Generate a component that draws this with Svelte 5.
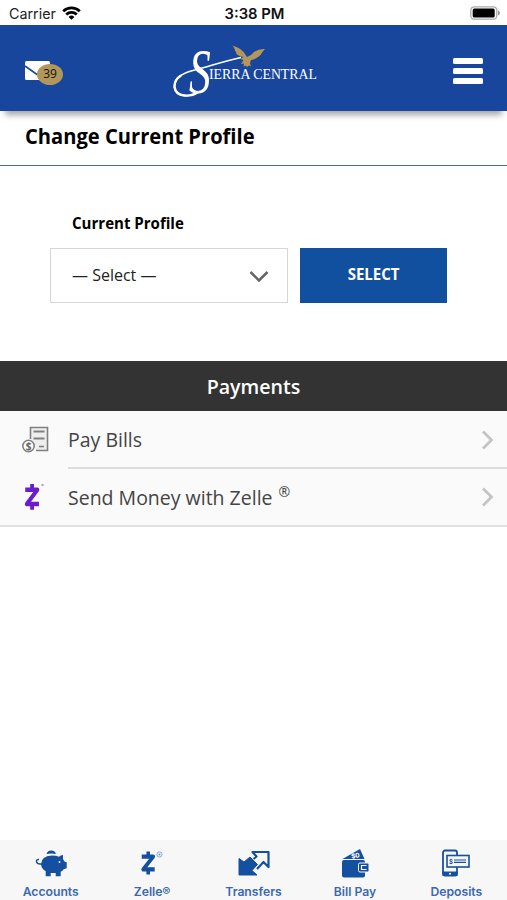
<script>
  const unread = 39;

  const payments = [
    { id: "bills", label: "Pay Bills" },
    { id: "zelle", label: "Send Money with Zelle", mark: "®" },
  ];

  const tabs = [
    { id: "accounts", label: "Accounts" },
    { id: "zelle", label: "Zelle®" },
    { id: "transfers", label: "Transfers" },
    { id: "billpay", label: "Bill Pay" },
    { id: "deposits", label: "Deposits" },
  ];
</script>

<style>
  :global(body) {
    margin: 0;
    background: #fff;
  }

  .screen {
    display: flex;
    flex-direction: column;
    width: 507px;
    height: 900px;
    overflow: hidden;
    background: #fff;
    font-family: "Open Sans", "Noto Sans", sans-serif;
    color: #000;
  }

  svg {
    display: block;
  }

  button {
    margin: 0;
    padding: 0;
    border: 0;
    background: none;
    font: inherit;
    color: inherit;
  }

  .status {
    display: grid;
    grid-template-columns: 1fr auto 1fr;
    align-items: center;
    box-sizing: border-box;
    height: 25px;
    padding: 2px 7px 0 9px;
    font-family: Inter, sans-serif;
    font-size: 14.3px;
    color: #222;
  }

  .carrier {
    display: flex;
    align-items: center;
    gap: 6px;
  }

  .carrier svg {
    margin-top: -2px;
  }

  .time {
    font-size: 14.8px;
    font-weight: 600;
    color: #111;
  }

  .battery {
    justify-self: end;
    margin-top: -2px;
  }

  .header {
    position: relative;
    display: grid;
    grid-template-columns: 1fr auto 1fr;
    align-items: center;
    box-sizing: border-box;
    height: 86px;
    padding: 0 24px;
    background: #19469d;
    box-shadow: 0 9px 6px -5px rgba(0, 0, 0, 0.35);
  }

  .mail {
    position: relative;
    justify-self: start;
    width: 40px;
    height: 22px;
    margin-top: 5px;
  }

  .badge {
    position: absolute;
    left: 13px;
    top: 4px;
    width: 26px;
    height: 21px;
    border-radius: 50%;
    background: #b3965a;
    font-size: 12px;
    line-height: 20px;
    text-align: center;
    color: #111;
  }

  .logo {
    margin-right: 16px;
    overflow: visible;
  }

  .menu {
    justify-self: end;
    display: flex;
    flex-direction: column;
    gap: 4px;
    margin-top: 6px;
  }

  .menu span {
    width: 30px;
    height: 6px;
    border-radius: 1.5px;
    background: #fff;
  }

  .title {
    box-sizing: border-box;
    height: 55px;
    margin: 0;
    padding-left: 25px;
    border-bottom: 1px solid #3f69b0;
    font-size: 22px;
    font-weight: 700;
    line-height: 48px;
  }

  .narrow {
    display: inline-block;
    white-space: nowrap;
    transform: scaleX(0.915);
    transform-origin: left;
  }

  .profile {
    box-sizing: border-box;
    height: 195px;
    padding: 45px 60px 0 50px;
  }

  .profile label {
    display: block;
    height: 37px;
    padding-left: 22px;
    font-size: 16px;
    font-weight: 700;
    line-height: 24px;
  }

  .profile .narrow {
    transform: scaleX(0.94);
  }

  .fields {
    display: flex;
    gap: 12px;
  }

  .select {
    display: flex;
    align-items: center;
    justify-content: space-between;
    box-sizing: border-box;
    width: 238px;
    height: 55px;
    padding: 0 18px 0 21px;
    border: 1.5px solid #d6d6d6;
    font-size: 16px;
    color: #222;
  }

  .select > span {
    padding-bottom: 1px;
  }

  .submit {
    width: 147px;
    height: 55px;
    padding-bottom: 3px;
    background: #11509e;
    font-size: 16px;
    font-weight: 700;
    color: #fff;
  }

  .submit .narrow {
    transform-origin: center;
  }

  .section {
    height: 50px;
    margin: 0;
    background: #333;
    font-size: 19.6px;
    font-weight: 600;
    line-height: 52px;
    text-align: center;
    color: #fff;
  }

  .list {
    background: #fafafa;
    border-bottom: 2px solid #e0e0e0;
  }

  .row {
    display: flex;
    align-items: stretch;
    height: 58px;
  }

  .row:last-child {
    height: 56px;
  }

  .row-icon {
    display: flex;
    align-items: center;
    width: 46px;
    padding: 0 0 1px 22px;
    box-sizing: content-box;
  }

  .row-text {
    display: flex;
    flex: 1;
    align-items: center;
    justify-content: space-between;
    padding: 1px 13px 0 0;
    border-bottom: 2px solid #dedede;
    font-size: 19.5px;
    color: #444;
  }

  .row:last-child .row-text {
    padding-top: 0;
    border-bottom: 0;
  }

  sup {
    margin-left: 1px;
    font-size: 14px;
    line-height: 0;
    vertical-align: 8px;
  }

  .tabs {
    display: flex;
    height: 60px;
    margin-top: auto;
    background: #f7f7f7;
  }

  .tab {
    display: flex;
    flex: 1;
    flex-direction: column;
    align-items: center;
    padding-top: 8px;
    font-family: Inter, sans-serif;
    font-size: 12.2px;
    font-weight: 600;
    line-height: 17px;
    color: #3b68b0;
  }

  .tab span {
    padding-top: 3px;
  }

  .tab svg {
    height: 32px;
  }
</style>

{#snippet zelle(color)}
  <path fill="none" stroke={color} stroke-width="5" stroke-linejoin="round" d="M1 6.200H17L3 21.800H19M10 0V6M10 22V28" />
{/snippet}

<div class="screen">
  <div class="status">
    <div class="carrier">
      <span>Carrier</span>
      <svg width="19" height="14" viewBox="0 0 19 14" fill="none" stroke="#000" stroke-width="2.700">
        <path d="M1.200 5.200a12 12 0 0 1 16.600 0" />
        <path d="M4.200 8.500a7.700 7.700 0 0 1 10.600 0" />
        <path d="M9.500 13.800 6.600 10.900a4.200 4.200 0 0 1 5.800 0z" fill="#000" stroke="none" />
      </svg>
    </div>
    <span class="time">3:38 PM</span>
    <svg class="battery" width="30" height="14" viewBox="0 0 30 14">
      <rect x=".8" y=".8" width="26" height="12.400" rx="3.500" fill="#fff" stroke="#aaa" stroke-width="1.300" />
      <rect x="2.700" y="2.500" width="22" height="9" rx="1.500" />
      <path d="M28 4.500q2 .6 2 2.500t-2 2.500z" fill="#999" />
    </svg>
  </div>

  <header class="header">
    <div class="mail">
      <svg width="27" height="22" viewBox="0 0 27 22">
        <rect x="1" y="1" width="25" height="19" rx="1.500" fill="#fff" />
        <path d="M1 6 13 14.500 26 6" fill="none" stroke="#19469d" stroke-width="1.600" />
      </svg>
      <span class="badge">{unread}</span>
    </div>

    <svg class="logo" width="150" height="86" viewBox="0 0 150 86">
      <!-- swash looping out of the initial and up to the bird -->
      <path d="M27 67C20 72 5 73 3.500 62 3 53 12 48 22 45.500 38 41.500 50 37 70 32.500" fill="none" stroke="#fff" stroke-width="1.500" />
      <path d="M27 67C20 72 5 73 3.500 62 3.300 57 6 53 10 50.500" fill="none" stroke="#fff" stroke-width="2.400" />
      <text font-family="Liberation Serif, serif" font-style="italic" font-size="64" fill="#fff" transform="translate(18 68) scale(.68 1)">S</text>
      <text x="38" y="54" font-family="Liberation Serif, serif" font-size="15" fill="#fff" textLength="108" lengthAdjust="spacingAndGlyphs">IERRA CENTRAL</text>
      <path fill="#b3965a" d="M61 20.500q8 2 12 7l3 4.500 4-2 3-3q5-3.500 11-3-3 3-4 5.500-4 4.500-10 5.500l-1 3 1 3.500-2-1-2 1.500-1.500-1.500-2 1 .5-3-3 .5 2.500-4-3-1 3-2q-6-1-7.500-4 1-1-1-2 0-3-3.500-6.500z" />
    </svg>

    <button class="menu" aria-label="Menu">
      <span></span><span></span><span></span>
    </button>
  </header>

  <h1 class="title"><span class="narrow">Change Current Profile</span></h1>

  <div class="profile">
    <label for="profile"><span class="narrow">Current Profile</span></label>
    <div class="fields">
      <button class="select" id="profile">
        <span>— Select —</span>
        <svg width="20" height="13" viewBox="0 0 20 13" fill="none" stroke="#666" stroke-width="2.500">
          <path d="M1.500 3 10 11.500 18.500 3" />
        </svg>
      </button>
      <button class="submit"><span class="narrow">SELECT</span></button>
    </div>
  </div>

  <h2 class="section">Payments</h2>
  <div class="list">
    {#each payments as item}
      <div class="row">
        <div class="row-icon">
          {#if item.id === "bills"}
            <svg width="27" height="28" viewBox="0 0 27 28" fill="none" stroke="#808080" stroke-width="1.600">
              <path d="M8.500 13V1.500h17v23H14" fill="#eee" />
              <path d="M11.500 5.500h11M11.500 12.500h11" stroke-width="2.200" />
              <path d="M17 20.500h5" />
              <circle cx="6.500" cy="20" r="5.700" fill="#fafafa" />
              <text x="6.500" y="23.700" text-anchor="middle" font-size="10" font-weight="700" fill="#666" stroke="none">$</text>
            </svg>
          {:else}
            <svg width="27" height="28" viewBox="0 0 27 28">
              <g transform="translate(2.500 1) scale(.76 .92)">{@render zelle("#6a1cd0")}</g>
              <circle cx="20.500" cy="2" r="1.200" fill="#b99be8" />
            </svg>
          {/if}
        </div>
        <div class="row-text">
          <span>{item.label}{#if item.mark}&nbsp;<sup>{item.mark}</sup>{/if}</span>
          <svg width="13" height="20" viewBox="0 0 13 20" fill="none" stroke="#c4c4c4" stroke-width="2.800">
            <path d="M2 1.500 10.500 10 2 18.500" />
          </svg>
        </div>
      </div>
    {/each}
  </div>

  <nav class="tabs">
    {#each tabs as tab}
      <div class="tab">
        <svg width="34" height="32" viewBox="0 0 34 32" fill="#14509f">
          {#if tab.id === "accounts"}
            <path d="M12.500 6a5 5 0 0 1 9.500 0q-5-1-9.500 0z" />
            <path d="M7 16q.5-8 10.500-8.500 5 0 7.500 1.200Q26.500 7 29 7v4.200q1.200 1 1.700 2.500l2 .5v6l-3 1q-1 1.500-3 2.500v4.500h-5V25h-5v3.200h-5v-5Q7 20.500 7 16z" />
            <path d="M7.500 16q-4.500.5-5-2.500 0-2.500 2.500-2" fill="none" stroke="#14509f" stroke-width="1.500" />
            <circle cx="25.500" cy="14" r=".9" fill="#fff" />
          {:else if tab.id === "zelle"}
            <g transform="translate(6 3.500) scale(.72 .82)">{@render zelle("#14509f")}</g>
            <circle cx="24.500" cy="6.500" r="2.600" fill="none" stroke="#6f93c8" stroke-width=".8" />
            <circle cx="24.500" cy="6.500" r="1" fill="#6f93c8" />
          {:else if tab.id === "transfers"}
            <path d="M2 10.500 7 14l6-5 7.500 7.500-5.500 6L20 27H2z" stroke="#14509f" stroke-linejoin="round" />
            <path d="M20 21 26.500 14l5 5V4H15.500l4 4.500-3 2.500" fill="none" stroke="#14509f" stroke-width="2.200" stroke-linejoin="round" />
          {:else if tab.id === "billpay"}
            <path d="M4.500 11 22 1l4.500 10z" />
            <text x="17.500" y="9.800" text-anchor="middle" font-size="6.500" font-weight="700" fill="#fff" transform="rotate(-12 18 8)">$0</text>
            <rect x="4" y="12" width="23" height="17.500" rx="2" />
            <rect x="20.500" y="15" width="10.500" height="9" rx="1.500" stroke="#f7f7f7" />
            <path d="M28.500 17.500h-5v4h5" fill="none" stroke="#f7f7f7" stroke-width="1.200" />
          {:else}
            <rect x="4" y="2.500" width="14" height="25" rx="2" fill="none" stroke="#14509f" stroke-width="1.800" />
            <path d="M3.500 23.500h15v4.500h-15z" />
            <circle cx="11" cy="25.700" r="1" fill="#fff" />
            <rect x="8" y="7.500" width="22" height="11.500" fill="#f7f7f7" stroke="#14509f" stroke-width="1.600" />
            <path d="M15 12h12M15 14.300h12" fill="none" stroke="#14509f" stroke-width="1.200" />
            <text x="12" y="15.500" text-anchor="middle" font-size="6" font-weight="700">$</text>
          {/if}
        </svg>
        <span>{tab.label}</span>
      </div>
    {/each}
  </nav>
</div>
